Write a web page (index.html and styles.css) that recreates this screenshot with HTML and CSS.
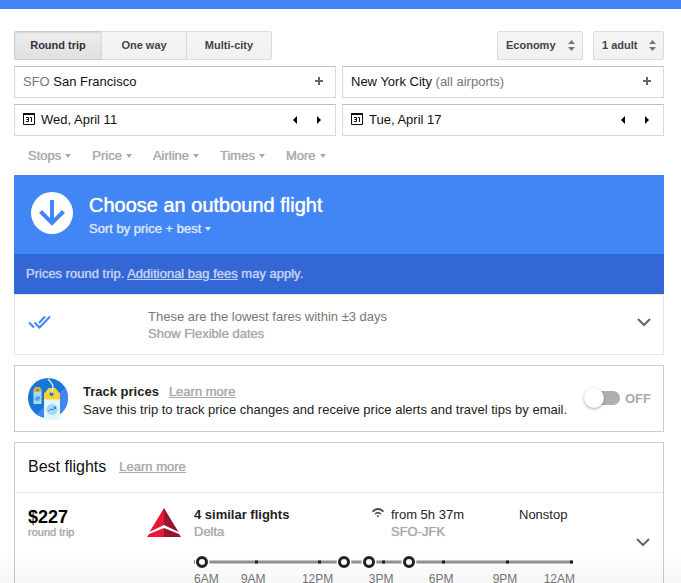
FILE: index.html
```html
<!DOCTYPE html>
<html lang="en">
<head>
<meta charset="utf-8">
<title>Flights</title>
<link rel="stylesheet" href="styles.css">
</head>
<body>
<div class="topbar"></div>
<main class="page">
  <form class="search">
    <div class="options">
      <div class="tabs">
        <button type="button" class="tab tab-active">Round trip</button>
        <button type="button" class="tab">One way</button>
        <button type="button" class="tab">Multi-city</button>
      </div>
      <div class="selects">
        <div class="select-box cabin">
          <select aria-label="Cabin class"><option>Economy</option></select>
          <svg class="updown" viewBox="0 0 7 11" width="7" height="11"><path d="M0 4L3.500 0L7 4zM0 7h7L3.500 11z" fill="#777"/></svg>
        </div>
        <div class="select-box people">
          <select aria-label="Passengers"><option>1 adult</option></select>
          <svg class="updown" viewBox="0 0 7 11" width="7" height="11"><path d="M0 4L3.500 0L7 4zM0 7h7L3.500 11z" fill="#777"/></svg>
        </div>
      </div>
    </div>
    <div class="fields">
      <div class="field">
        <button type="button" class="value"><span class="muted">SFO</span> San Francisco</button>
        <button type="button" class="mini" aria-label="Add origin"><svg viewBox="0 0 8 8" width="8" height="8"><path d="M3 0h2v3h3v2H5v3H3V5H0V3h3z" fill="#666"/></svg></button>
      </div>
      <div class="field">
        <button type="button" class="value">New York City <span class="muted">(all airports)</span></button>
        <button type="button" class="mini" aria-label="Add destination"><svg viewBox="0 0 8 8" width="8" height="8"><path d="M3 0h2v3h3v2H5v3H3V5H0V3h3z" fill="#666"/></svg></button>
      </div>
      <div class="field">
        <button type="button" class="value date">
          <svg viewBox="0 0 12 12" width="12" height="12" fill="none" stroke="#111"><path d="M.5 1.500h11v10H.5z"/><path d="M0 1h12" stroke-width="2"/><path d="M3 4.500h2.500v4H3M3.500 6.500h2M7 4.500h1.500V9"/></svg>
          Wed, April 11
        </button>
        <button type="button" class="mini" aria-label="Earlier departure"><svg viewBox="0 0 4 8" width="4" height="8"><path d="M4 0v8L0 4z"/></svg></button>
        <button type="button" class="mini" aria-label="Later departure"><svg viewBox="0 0 4 8" width="4" height="8"><path d="M0 0v8L4 4z"/></svg></button>
      </div>
      <div class="field">
        <button type="button" class="value date">
          <svg viewBox="0 0 12 12" width="12" height="12" fill="none" stroke="#111"><path d="M.5 1.500h11v10H.5z"/><path d="M0 1h12" stroke-width="2"/><path d="M3 4.500h2.500v4H3M3.500 6.500h2M7 4.500h1.500V9"/></svg>
          Tue, April 17
        </button>
        <button type="button" class="mini" aria-label="Earlier return"><svg viewBox="0 0 4 8" width="4" height="8"><path d="M4 0v8L0 4z"/></svg></button>
        <button type="button" class="mini" aria-label="Later return"><svg viewBox="0 0 4 8" width="4" height="8"><path d="M0 0v8L4 4z"/></svg></button>
      </div>
    </div>
    <div class="filters">
      <button type="button" class="filter">Stops</button>
      <button type="button" class="filter">Price</button>
      <button type="button" class="filter">Airline</button>
      <button type="button" class="filter">Times</button>
      <button type="button" class="filter">More</button>
    </div>
  </form>

  <header class="banner">
    <svg viewBox="0 0 42 42" width="42" height="42"><circle cx="21" cy="21" r="21" fill="#fff"/><path d="M21 8v23M9.500 19.500L21 31l11.500-11.500" fill="none" stroke="#4285f4" stroke-width="4"/></svg>
    <div>
      <h1>Choose an outbound flight</h1>
      <button type="button" class="filter sort">Sort by price + best</button>
    </div>
  </header>
  <p class="notice">Prices round trip. <a href="#">Additional bag fees</a> may apply.</p>
  <section class="flexible">
    <svg viewBox="0 0 23 14" width="23" height="14" fill="none" stroke="#4285f4" stroke-width="2"><path d="M1 7.500l5 5M6.500 7.500l5 5L22 1.500M11 8l6-6.500"/></svg>
    <div class="flex-text">
      <p>These are the lowest fares within ±3 days</p>
      <a href="#">Show Flexible dates</a>
    </div>
    <button type="button" class="chevron" aria-label="Expand flexible dates"><svg viewBox="0 0 14 9" width="14" height="9"><path d="M1 1l6 6 6-6" fill="none" stroke="#666" stroke-width="2"/></svg></button>
  </section>

  <section class="card track">
    <svg viewBox="0 0 40 42" width="40" height="42">
      <clipPath id="disc"><circle cx="20" cy="20" r="20"/></clipPath>
      <g clip-path="url(#disc)"><path d="M0 0h40v40H0z" fill="#1976d2"/><path d="M40 7L4 40h36z" fill="#4285f4"/></g>
      <path d="M5.500 12l2-3h4l2 3v14h-8z" fill="#a8dcf5"/><path d="M5.500 14v-2l2-3h4l2 3v2z" fill="#d9b13b"/><circle cx="9.500" cy="12" r="1" fill="#1976d2"/><circle cx="9.500" cy="20.500" r="3" fill="#73b9f0"/><path d="M7.500 21.500l1.500-1 1 .5 1.500-2" fill="none" stroke="#2979d8"/>
      <path d="M16 16l5-6h6l5 6v26H16z" fill="#e0f7fc"/><path d="M16 21.500V16l5-6h6l5 6v5.500z" fill="#fdd032"/><circle cx="23.500" cy="16" r="2" fill="#1976d2"/>
      <path d="M20 1c3 3 5 5 5 8 0 3-1 4-1.500 6" fill="none" stroke="#c9effa" stroke-width="1.500"/>
      <circle cx="24" cy="31.500" r="5.500" fill="#a5d8fa"/><path d="M20.500 33l2.500-2 2 1 2.500-3M25.500 29h2v2" fill="none" stroke="#2979e8"/>
    </svg>
    <div class="track-text">
      <p><b>Track prices</b><a class="more" href="#">Learn more</a></p>
      <p>Save this trip to track price changes and receive price alerts and travel tips by email.</p>
    </div>
    <label class="switch"><input type="checkbox">OFF</label>
  </section>

  <section class="card best">
    <div class="best-head"><h2>Best flights</h2><a class="more" href="#">Learn more</a></div>
    <article class="flight">
      <div class="price"><strong>$227</strong><small>round trip</small></div>
      <svg class="delta" viewBox="0 0 34 29" width="34" height="29"><path d="M17 0L2.500 24 17 17z" fill="#e51937"/><path d="M17 0l14.500 24L17 17z" fill="#98162d"/><path d="M0 29l2-3 15-6v9z" fill="#e51937"/><path d="M34 29l-2-3-15-6v9z" fill="#98162d"/></svg>
      <div class="details">
        <div class="facts">
          <div><b>4 similar flights</b><span class="faint">Delta</span></div>
          <svg class="wifi" viewBox="0 0 12 10" width="12" height="10" fill="none" stroke="#444"><path d="M.5 3.500Q6-1.500 11.500 3.500" stroke-width="1.800"/><path d="M3 6q3-2.500 6 0" stroke-width="1.500"/><path d="M4.500 7.500h3L6 9.500z" fill="#444" stroke="none"/></svg>
          <div><span>from 5h 37m</span><span class="faint">SFO-JFK</span></div>
          <div><span>Nonstop</span></div>
        </div>
        <svg class="axis" viewBox="0 0 380 14" width="380" height="14">
          <path d="M9 7h370" stroke="#919191" stroke-width="3"/>
          <path d="M0 7h1M61 7h3M124 7h3M188 7h3M248 7h3M312 7h3M376 7h3" stroke="#222" stroke-width="3"/>
          <g fill="#fff" stroke="#fff" stroke-width="5"><circle cx="8" cy="7" r="5"/><circle cx="150" cy="7" r="5"/><circle cx="175" cy="7" r="5"/><circle cx="215" cy="7" r="5"/></g>
          <g fill="#fff" stroke="#222" stroke-width="3"><circle cx="8" cy="7" r="4.500"/><circle cx="150" cy="7" r="4.500"/><circle cx="175" cy="7" r="4.500"/><circle cx="215" cy="7" r="4.500"/></g>
        </svg>
        <div class="hours"><span>6AM</span><span>9AM</span><span>12PM</span><span>3PM</span><span>6PM</span><span>9PM</span><span>12AM</span></div>
      </div>
      <button type="button" class="chevron" aria-label="Show flights"><svg viewBox="0 0 14 9" width="14" height="9"><path d="M1 1l6 6 6-6" fill="none" stroke="#666" stroke-width="2"/></svg></button>
    </article>
  </section>
</main>
<div class="fade"></div>
</body>
</html>
```
FILE: styles.css
```css
* { box-sizing: border-box; }
body {
  margin: 0;
  background: #fff;
  color: #222;
  font: 13px/17px "Liberation Sans", Arial, sans-serif;
}
h1, h2, p { margin: 0; font-weight: normal; }
svg { display: block; flex: none; }
button, select { font: inherit; color: inherit; }
button { margin: 0; padding: 0; border: 0; background: none; cursor: pointer; }
.topbar { height: 9px; background: #4285f4; }
.page { padding: 22px 17px 0 14px; }

/* Search form */
.options { display: flex; justify-content: space-between; margin-bottom: 6px; }
.tabs, .selects { display: flex; }
.selects { gap: 10px; }
.tab, .select-box select {
  height: 29px;
  border: 1px solid #dcdcdc;
  background: linear-gradient(#f5f5f5, #f1f1f1);
  color: #444;
  font-size: 11px;
  font-weight: bold;
}
.tab { width: 86px; margin-left: -1px; }
.tab:first-child { width: 88px; margin-left: 0; border-radius: 2px 0 0 2px; }
.tab:last-child { border-radius: 0 2px 2px 0; }
.tab-active {
  border-color: #ccc;
  background: linear-gradient(#eee, #e0e0e0);
  box-shadow: inset 0 1px 2px rgba(0, 0, 0, 0.1);
  color: #333;
}
.select-box { position: relative; }
.select-box select { appearance: none; width: 100%; padding: 0 8px; border-radius: 2px; }
.cabin { width: 86px; }
.people { width: 71px; }
.updown { position: absolute; right: 8px; top: 9px; pointer-events: none; }
.fields { display: grid; grid-template-columns: 1fr 1fr; gap: 6px; }
.field {
  display: flex;
  align-items: center;
  height: 32px;
  padding: 0 4px 2px 8px;
  border: 1px solid #d9d9d9;
  border-top-color: #c0c0c0;
}
.value { flex: 1; color: #111; text-align: left; }
.date { display: flex; align-items: center; gap: 6px; }
.date + .mini, .date + .mini + .mini { padding-top: 2px; }
.mini { display: grid; place-items: center; width: 24px; height: 24px; }
.muted { color: #777; }
.filters { display: flex; gap: 21px; padding: 11px 14px; color: #aaa; }
.filter { display: flex; align-items: center; gap: 4px; text-shadow: 0 0 1px currentColor; }
.filter::after {
  content: "";
  border: 3px solid transparent;
  border-top: 4px solid currentColor;
  border-bottom: 0;
}

/* Results heading */
.banner {
  display: flex;
  gap: 16px;
  height: 79px;
  padding: 17px;
  background: #4285f4;
  color: #fff;
}
h1 { font-size: 20px; line-height: 26px; text-shadow: 0 0 1px #fff; }
.sort { margin-top: 2px; color: #d9e7fd; }
.notice { padding: 11px 12px 12px; background: #3367d6; color: #c2d1f3; text-shadow: 0 0 1px currentColor; }
.notice a { color: inherit; }
.flexible {
  display: flex;
  height: 61px;
  padding: 13px 12px 0 13px;
  border: 1px solid #e5e5e5;
  color: #777;
}
.flexible > svg { margin-top: 7px; }
.flex-text { flex: 1; margin-left: 97px; }
.flex-text a { color: #aaa; text-decoration: none; text-shadow: 0 0 1px currentColor; }
.chevron { align-self: flex-start; margin-top: 10px; }

/* Cards */
.card { margin-top: 10px; border: 1px solid #ccc; }
.more { color: #aaa; text-shadow: 0 0 1px currentColor; }
.track { display: flex; height: 67px; padding: 12px 12px 0 13px; }
.track-text { flex: 1; margin: 5px 0 0 15px; line-height: 18px; white-space: nowrap; }
.track-text .more { margin-left: 10px; }
.switch {
  display: flex;
  align-items: center;
  gap: 5px;
  height: 40px;
  color: #aaa;
  font-weight: bold;
}
.switch input {
  appearance: none;
  display: flex;
  align-items: center;
  width: 32px;
  height: 14px;
  margin: 0;
  border-radius: 7px;
  background: #b0b0b0;
}
.switch input::before {
  content: "";
  width: 20px;
  height: 20px;
  margin-left: -4px;
  flex: none;
  border-radius: 50%;
  background: #fff;
  box-shadow: 0 1px 3px rgba(0, 0, 0, 0.35);
}
.switch input:checked { justify-content: flex-end; background: #4285f4; }
.best { border-bottom: 0; }
.best-head {
  display: flex;
  align-items: center;
  gap: 13px;
  height: 50px;
  padding: 0 13px 2px;
  border-bottom: 1px solid #e5e5e5;
}
h2 { font-size: 16px; line-height: 20px; color: #111; }
.flight { display: flex; padding: 13px 13px 0; }
.price { width: 119px; padding-top: 1px; }
.price strong { display: block; color: #000; font-size: 18px; line-height: 20px; }
.price small { display: block; color: #aaa; font-size: 11px; line-height: 11px; text-shadow: 0 0 1px currentColor; }
.delta { margin-top: 2px; }
.details { flex: 1; margin-left: 13px; }
.facts { display: grid; grid-template-columns: 178px 19px 128px auto; }
.facts span, .facts b { display: block; }
.facts .faint { color: #aaa; text-shadow: 0 0 1px currentColor; }
.wifi { margin-top: 2px; }
.axis { margin-top: 15px; }
.hours {
  display: grid;
  grid-template-columns: 47fr 61fr 67fr 60fr 64fr 51fr 31fr;
  width: 381px;
  margin-top: 2px;
  color: #777;
  font-size: 12px;
  line-height: 16px;
}
.flight .chevron { margin-top: 32px; }
.fade {
  position: fixed;
  inset: auto 0 0;
  height: 30px;
  background: linear-gradient(transparent, rgba(0, 0, 0, 0.03));
  pointer-events: none;
}
```
